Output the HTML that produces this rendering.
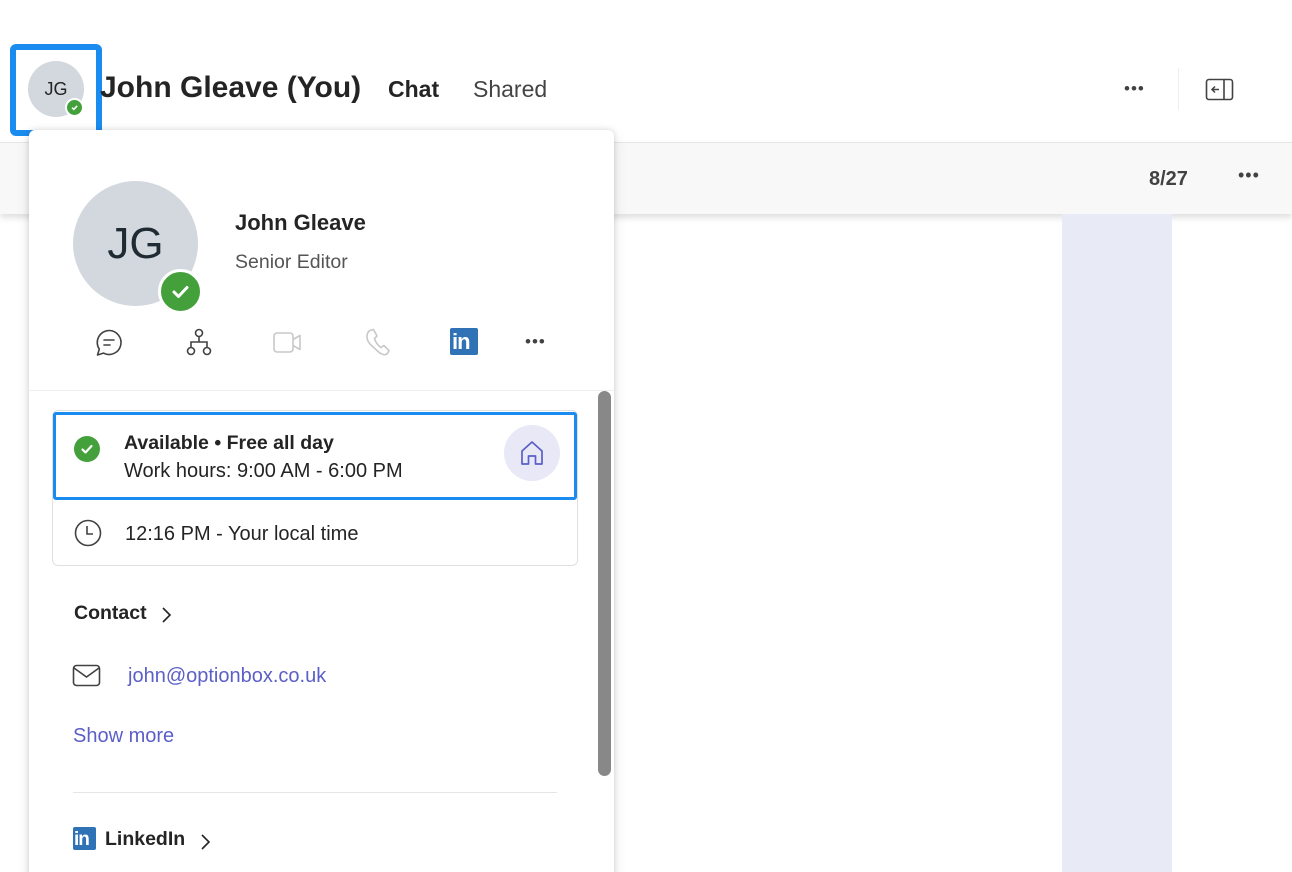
<!DOCTYPE html>
<html><head><meta charset="utf-8"><style>
*{margin:0;padding:0;box-sizing:border-box}
html,body{width:1292px;height:872px;overflow:hidden}
body{background:#fff;font-family:"Liberation Sans",sans-serif;color:#242424;position:relative}
.a{position:absolute}
.t{position:absolute;white-space:nowrap;line-height:1}
</style></head><body>
<div class="a" style="left:0;top:142px;width:1292px;height:72px;background:#f8f8f8;border-top:1px solid #e6e6e6;box-shadow:0 4px 6px rgba(0,0,0,.12)"></div>
<div class="a" style="left:1062px;top:214px;width:110px;height:658px;background:#e8eaf6"></div>
<div class="t" style="left:1149px;top:169px;font-size:20px;color:#424242;font-weight:bold">8/27</div>
<div class="t" style="left:1238px;top:166px;font-size:18px;color:#424242;letter-spacing:1px">•••</div>

<div class="a" style="left:10px;top:44px;width:92px;height:92px;border:6px solid #1a8cf0;border-radius:6px"></div>
<div class="a" style="left:28px;top:61px;width:56px;height:56px;border-radius:50%;background:#d2d8de"></div>
<div class="t" style="left:28px;top:80px;width:56px;text-align:center;font-size:18px;color:#242424">JG</div>
<div class="a" style="left:65px;top:98px;width:19px;height:19px;border-radius:50%;background:#43a03a;border:2px solid #fff"></div>
<svg class="a" style="left:69px;top:102px" width="11" height="11" viewBox="0 0 11 11"><path d="M3 5.6l1.8 1.8 3.4-3.6" stroke="#fff" stroke-width="1.5" fill="none"/></svg>

<div class="t" style="left:100px;top:73px;font-size:30px;font-weight:bold;color:#242424">John Gleave (You)</div>
<div class="t" style="left:388px;top:78px;font-size:23px;font-weight:bold;color:#242424">Chat</div>
<div class="t" style="left:473px;top:78px;font-size:23px;color:#444">Shared</div>
<div class="t" style="left:1124px;top:80px;font-size:17px;color:#424242;letter-spacing:1px">•••</div>
<div class="a" style="left:1178px;top:68px;width:1px;height:42px;background:#eee"></div>
<svg class="a" style="left:1205px;top:78px" width="30" height="24" viewBox="0 0 30 24"><rect x="1.5" y="1.5" width="26" height="20" rx="2.5" fill="none" stroke="#424242" stroke-width="1.6"/><line x1="19" y1="2" x2="19" y2="21" stroke="#424242" stroke-width="1.6"/><path d="M14 11.5H7M10 8.5l-3 3 3 3" stroke="#424242" stroke-width="1.5" fill="none"/></svg>

<div class="a" style="left:29px;top:130px;width:585px;height:760px;background:#fff;border-radius:6px;box-shadow:0 0 6px rgba(0,0,0,.14),0 4px 14px rgba(0,0,0,.1)"></div>
<div class="a" style="left:73px;top:181px;width:125px;height:125px;border-radius:50%;background:#d2d8de"></div>
<div class="t" style="left:73px;top:222px;width:125px;text-align:center;font-size:44px;color:#1f2a33">JG</div>
<div class="a" style="left:158px;top:269px;width:45px;height:45px;border-radius:50%;background:#43a03a;border:3px solid #fff"></div>
<svg class="a" style="left:170px;top:281px" width="21" height="21" viewBox="0 0 21 21"><path d="M4 11l4.5 4.5L17 6.5" stroke="#fff" stroke-width="3" fill="none" stroke-linecap="round" stroke-linejoin="round"/></svg>
<div class="t" style="left:235px;top:212px;font-size:22px;font-weight:bold">John Gleave</div>
<div class="t" style="left:235px;top:253px;font-size:19.5px;color:#555">Senior Editor</div>

<svg class="a" style="left:93px;top:327px" width="32" height="32" viewBox="0 0 32 32"><path d="M16 3.5a12 12 0 1 1-5.6 22.6L4.5 28l1.8-5.8A12 12 0 0 1 16 3.5z" fill="none" stroke="#424242" stroke-width="1.6" stroke-linejoin="round"/><path d="M11 13h10M11 18h6" stroke="#424242" stroke-width="1.6" stroke-linecap="round"/></svg>
<svg class="a" style="left:183px;top:327px" width="32" height="32" viewBox="0 0 32 32"><circle cx="16" cy="6" r="3.5" fill="none" stroke="#424242" stroke-width="1.6"/><circle cx="8" cy="24" r="3.5" fill="none" stroke="#424242" stroke-width="1.6"/><circle cx="24" cy="24" r="3.5" fill="none" stroke="#424242" stroke-width="1.6"/><path d="M16 9.5V15M8 20.5V15h16v5.5" fill="none" stroke="#424242" stroke-width="1.6"/></svg>
<svg class="a" style="left:272px;top:328px" width="32" height="30" viewBox="0 0 32 30"><rect x="2" y="5" width="19" height="19" rx="3" fill="none" stroke="#c8c8c8" stroke-width="1.6"/><path d="M21 11.5l7-4v14l-7-4" fill="none" stroke="#c8c8c8" stroke-width="1.6" stroke-linejoin="round"/></svg>
<svg class="a" style="left:362px;top:327px" width="30" height="32" viewBox="0 0 30 32"><path d="M8 3.5l3.5-1 3.5 6.5-2.5 2.5c1 3.5 3.5 7 6.5 9l2.8-2 5.2 5-1.5 3c-2 2-6 1.5-10-2.5S5 16 5 10c0-3 1-5.5 3-6.5z" fill="none" stroke="#c8c8c8" stroke-width="1.6" stroke-linejoin="round"/></svg>
<div class="a" style="left:450px;top:328px;width:28px;height:27px;background:#2f72b5;border-radius:2px"></div>
<div class="t" style="left:452px;top:331px;font-size:22px;font-weight:bold;color:#fff;letter-spacing:-1px">in</div>
<div class="t" style="left:525px;top:333px;font-size:17px;color:#424242;letter-spacing:1px">•••</div>
<div class="a" style="left:29px;top:390px;width:585px;height:1px;background:#eee"></div>
<div class="a" style="left:598px;top:391px;width:13px;height:385px;background:#888;border-radius:7px"></div>

<div class="a" style="left:52px;top:410px;width:526px;height:156px;border:1px solid #e0e0e0;border-radius:6px"></div>
<div class="a" style="left:53px;top:412px;width:524px;height:88px;border:3px solid #1a8cf0;border-radius:3px"></div>
<div class="a" style="left:74px;top:436px;width:26px;height:26px;border-radius:50%;background:#43a03a"></div>
<svg class="a" style="left:74px;top:436px" width="26" height="26" viewBox="0 0 26 26"><path d="M8.5 13.5l3 3 6-6.5" stroke="#fff" stroke-width="2.2" fill="none" stroke-linecap="round" stroke-linejoin="round"/></svg>
<div class="t" style="left:124px;top:434px;font-size:19.5px;font-weight:bold;color:#242424">Available • Free all day</div>
<div class="t" style="left:124px;top:461px;font-size:20px;color:#242424">Work hours: 9:00 AM - 6:00 PM</div>
<div class="a" style="left:504px;top:425px;width:56px;height:56px;border-radius:50%;background:#e8e8f7"></div>
<svg class="a" style="left:518px;top:439px" width="28" height="28" viewBox="0 0 28 28"><path d="M4 25V12L14 3l10 9v13h-6.5v-8h-7v8z" fill="none" stroke="#5b5fc7" stroke-width="1.7" stroke-linejoin="round"/></svg>
<svg class="a" style="left:73px;top:518px" width="30" height="30" viewBox="0 0 30 30"><circle cx="15" cy="15" r="12.5" fill="none" stroke="#424242" stroke-width="1.6"/><path d="M14 8v8h6" fill="none" stroke="#424242" stroke-width="1.6"/></svg>
<div class="t" style="left:125px;top:524px;font-size:20px;color:#242424">12:16 PM - Your local time</div>

<div class="t" style="left:74px;top:604px;font-size:19.5px;font-weight:bold;color:#242424">Contact</div>
<svg class="a" style="left:158px;top:605px" width="16" height="20" viewBox="0 0 16 20"><path d="M5 3l7 7-7 7" fill="none" stroke="#242424" stroke-width="1.6"/></svg>
<svg class="a" style="left:72px;top:664px" width="30" height="24" viewBox="0 0 30 24"><rect x="1.5" y="1.5" width="26" height="20" rx="3" fill="none" stroke="#424242" stroke-width="1.6"/><path d="M2 4l12.5 9L27 4" fill="none" stroke="#424242" stroke-width="1.6"/></svg>
<div class="t" style="left:128px;top:666px;font-size:20px;color:#5b5fc7">john@optionbox.co.uk</div>
<div class="t" style="left:73px;top:726px;font-size:20px;color:#5b5fc7">Show more</div>
<div class="a" style="left:73px;top:792px;width:484px;height:1px;background:#e6e6e6"></div>
<div class="a" style="left:73px;top:827px;width:23px;height:23px;background:#2f72b5;border-radius:2px"></div>
<div class="t" style="left:74px;top:830px;font-size:19px;font-weight:bold;color:#fff;letter-spacing:-1px">in</div>
<div class="t" style="left:105px;top:830px;font-size:19.5px;font-weight:bold;color:#242424">LinkedIn</div>
<svg class="a" style="left:197px;top:832px" width="16" height="20" viewBox="0 0 16 20"><path d="M5 3l7 7-7 7" fill="none" stroke="#242424" stroke-width="1.6"/></svg>
</body></html>
